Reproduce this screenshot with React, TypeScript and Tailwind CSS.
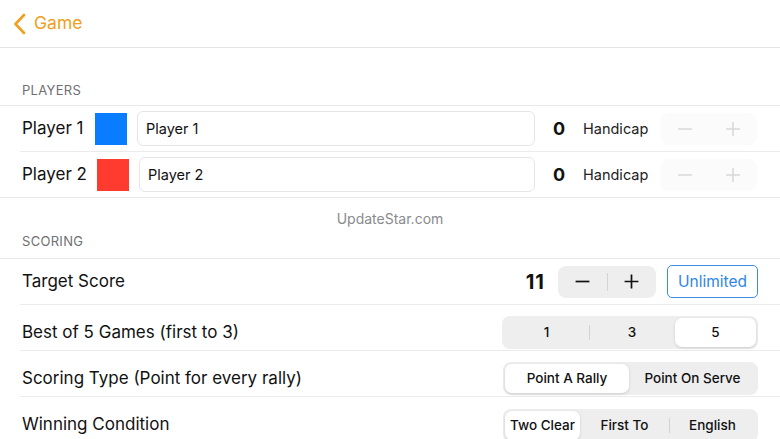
import React from 'react';

const font = { fontFamily: 'Inter, "Noto Sans", sans-serif' };

function Segmented({ items, selected, widths }: { items: string[]; selected: number; widths: string[] }) {
  return (
    <div className="flex h-[33px] items-stretch rounded-[8px] bg-[#eeeeef] p-[2px]">
      {items.map((it, i) => {
        const on = i === selected;
        const divider = i > 0 && !on && i - 1 !== selected;
        return (
          <div key={it} className={`relative flex items-center justify-center ${widths[i]}`}>
            {divider && <span className="absolute left-0 top-[7px] h-[15px] w-px bg-[#d4d4d6]" />}
            <div className={`flex h-full w-full items-center justify-center rounded-[7px] text-[13.5px] font-medium text-[#111] ${on ? 'bg-white shadow-[0_1px_3px_rgba(0,0,0,0.15)]' : ''}`}>
              {it}
            </div>
          </div>
        );
      })}
    </div>
  );
}

function PlayerRow({ name, color, nameW, fieldW }: { name: string; color: string; nameW: string; fieldW: string }) {
  return (
    <div className="flex h-[45px] items-center pl-[2px]">
      <span className={`${nameW} text-[17px] text-[#111]`}>{name}</span>
      <span className="h-[32px] w-[32px] shrink-0" style={{ background: color }} />
      <div className={`ml-[10px] flex h-[35px] ${fieldW} items-center rounded-[6px] border border-[#e6e6e8] px-[8px] text-[14.5px] text-[#111]`}>
        {name}
      </div>
      <span className="ml-[18px] w-[14px] text-[18px] font-bold text-[#111]">0</span>
      <span className="ml-[16px] text-[14.5px] text-[#222]">Handicap</span>
      <div className="ml-[13px] flex h-[32px] w-[96px] items-center rounded-[8px] bg-[#fbfbfb] text-[#d8d8da]">
        <span className="flex flex-1 justify-center">
          <svg width="16" height="16" viewBox="0 0 16 16"><path d="M1 8h14" stroke="currentColor" strokeWidth="1.5" /></svg>
        </span>
        <span className="flex flex-1 justify-center">
          <svg width="16" height="16" viewBox="0 0 16 16"><path d="M1 8h14M8 1v14" stroke="currentColor" strokeWidth="1.5" /></svg>
        </span>
      </div>
    </div>
  );
}

function Row({ label, children, border = true, low = false }: { label: string; children: React.ReactNode; border?: boolean; low?: boolean }) {
  return (
    <div className="pl-[20px]">
      <div className={`flex h-[46px] items-center pr-[22px] ${low ? 'pt-[10px]' : ''} ${border ? 'border-b border-[#ebebed]' : ''}`}>
        <span className="pl-[2px] text-[17px] text-[#111]">{label}</span>
        <div className="ml-auto flex items-center">{children}</div>
      </div>
    </div>
  );
}

export default function App() {
  return (
    <div className="h-[439px] w-[780px] overflow-hidden bg-white" style={font}>
      <div className="flex h-[48px] items-center border-b border-[#e4e4e6] pl-[13px]">
        <svg width="14" height="22" viewBox="0 0 14 22" className="text-[#f0a020]">
          <path d="M11 2 2.5 11 11 20" fill="none" stroke="currentColor" strokeWidth="2.6" strokeLinecap="round" strokeLinejoin="round" />
        </svg>
        <span className="ml-[7px] text-[17.5px] text-[#f0a020]">Game</span>
      </div>

      <div className="flex h-[57px] items-end pb-[5px] pl-[22px] text-[13px] tracking-[0.3px] text-[#707074]">PLAYERS</div>
      <div className="border-y border-[#e8e8ea] pl-[20px]">
        <div className="border-b border-[#ebebed]">
          <PlayerRow name="Player 1" color="#0a7cff" nameW="w-[73px]" fieldW="w-[398px]" />
        </div>
        <PlayerRow name="Player 2" color="#ff3b30" nameW="w-[75px]" fieldW="w-[396px]" />
      </div>

      <div className="flex h-[40px] items-center justify-center text-[14px] text-[#8a8a8e]">UpdateStar.com</div>
      <div className="flex h-[13px] items-end pl-[22px] text-[13px] tracking-[0.3px] text-[#707074]">SCORING</div>
      <div className="mt-[7px] border-t border-[#e8e8ea]">
        <Row label="Target Score">
          <span className="mr-[13px] text-[20px] font-bold tracking-[1px] text-[#111]">11</span>
          <div className="flex h-[32px] w-[98px] items-center rounded-[8px] bg-[#eeeeef]">
            <span className="flex flex-1 justify-center text-[#111]">
              <svg width="17" height="17" viewBox="0 0 16 16"><path d="M1.5 8h13" stroke="currentColor" strokeWidth="1.6" /></svg>
            </span>
            <span className="h-[18px] w-px bg-[#d4d4d6]" />
            <span className="flex flex-1 justify-center text-[#111]">
              <svg width="17" height="17" viewBox="0 0 16 16"><path d="M1.5 8h13M8 1.5v13" stroke="currentColor" strokeWidth="1.6" /></svg>
            </span>
          </div>
          <div className="ml-[11px] flex h-[33px] w-[91px] items-center justify-center rounded-[5px] border border-[#3b8be6] text-[15.5px] text-[#2f86e6]">
            Unlimited
          </div>
        </Row>
        <Row label="Best of 5 Games (first to 3)" low>
          <Segmented items={['1', '3', '5']} selected={2} widths={['w-[85px]', 'w-[86px]', 'w-[81px]']} />
        </Row>
        <Row label="Scoring Type (Point for every rally)" low>
          <Segmented items={['Point A Rally', 'Point On Serve']} selected={0} widths={['w-[124px]', 'w-[127px]']} />
        </Row>
        <Row label="Winning Condition" border={false} low>
          <Segmented items={['Two Clear', 'First To', 'English']} selected={0} widths={['w-[75px]', 'w-[89px]', 'w-[87px]']} />
        </Row>
      </div>
    </div>
  );
}
